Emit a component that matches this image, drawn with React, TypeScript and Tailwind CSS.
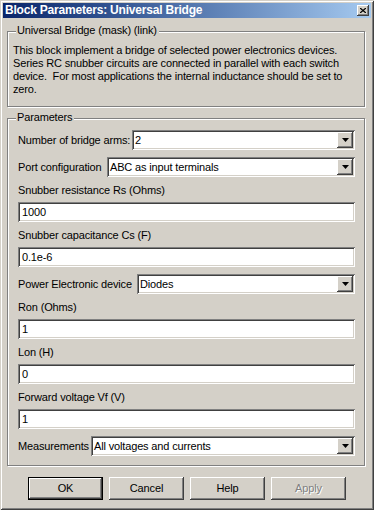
import React from "react";

const raised =
  "shadow-[inset_-1px_-1px_#404040,inset_1px_1px_#ffffff,inset_-2px_-2px_#808080,inset_2px_2px_#d4d0c8]";
const sunken =
  "shadow-[inset_1px_1px_#808080,inset_-1px_-1px_#ffffff,inset_2px_2px_#404040,inset_-2px_-2px_#d4d0c8]";

function Arrow() {
  return (
    <div className={`w-[16px] h-[16px] m-[2px] shrink-0 bg-[#d4d0c8] flex items-center justify-center ${raised}`}>
      <svg width="7" height="4" viewBox="0 0 7 4">
        <polygon points="0,0 7,0 3.5,4" fill="#000" />
      </svg>
    </div>
  );
}

function Combo({ label, value, labelW }: { label: string; value: string; labelW: string }) {
  return (
    <div className="flex items-center h-[20px]">
      <span className={`${labelW} shrink-0 whitespace-nowrap`}>{label}</span>
      <div className={`flex-1 h-[20px] bg-white flex items-center ${sunken}`}>
        <span className="flex-1 pl-[3px] whitespace-nowrap">{value}</span>
        <Arrow />
      </div>
    </div>
  );
}

function Field({ label, value }: { label: string; value: string }) {
  return (
    <div className="flex flex-col gap-[5px]">
      <div className="h-[13px] whitespace-nowrap">{label}</div>
      <div className={`h-[20px] bg-white flex items-center pl-[4px] ${sunken}`}>{value}</div>
    </div>
  );
}

function Btn({ children, def, disabled }: { children: React.ReactNode; def?: boolean; disabled?: boolean }) {
  if (def) {
    return (
      <div className="w-[75px] h-[23px] border border-black flex">
        <div className={`flex-1 flex items-center justify-center ${raised}`}>{children}</div>
      </div>
    );
  }
  return (
    <div
      className={`w-[75px] h-[23px] flex items-center justify-center ${raised} ${
        disabled ? "text-[#808080] [text-shadow:1px_1px_0_#ffffff]" : ""
      }`}
    >
      {children}
    </div>
  );
}

export default function App() {
  return (
    <div
      className={`w-[374px] h-[510px] bg-[#d4d0c8] p-[3px] flex flex-col text-black text-[11px] leading-[13px] tracking-[-0.15px] font-['Liberation_Sans',Arial,sans-serif] shadow-[inset_1px_1px_#d4d0c8,inset_-1px_-1px_#404040,inset_2px_2px_#ffffff,inset_-2px_-2px_#808080]`}
    >
      {/* Title bar */}
      <div className="h-[15px] shrink-0 flex items-center justify-between pl-[2px] pr-[2px] bg-linear-to-r from-[#0a246a] to-[#a6caf0]">
        <span className="text-white font-bold text-[12px] tracking-[-0.2px] leading-[15px]">
          Block Parameters: Universal Bridge
        </span>
        <div className={`w-[12px] h-[11px] bg-[#d4d0c8] flex items-center justify-center ${raised}`}>
          <svg width="6" height="5" viewBox="0 0 6 5">
            <path d="M0 0 L6 5 M6 0 L0 5" stroke="#000" strokeWidth="1.3" />
          </svg>
        </div>
      </div>

      {/* Group 1 */}
      <div className="relative mt-[13px] ml-[4px] w-[358px] h-[76px] shrink-0 border border-[#808080] shadow-[inset_1px_1px_#ffffff,1px_1px_#ffffff] pt-[12px] pl-[5px]">
        <span className="absolute left-[8px] top-[-8px] pl-[1px] pr-[2px] bg-[#d4d0c8] whitespace-nowrap">
          Universal Bridge (mask) (link)
        </span>
        <p className="whitespace-pre">
          {"This block implement a bridge of selected power electronics devices.\nSeries RC snubber circuits are connected in parallel with each switch\ndevice.  For most applications the internal inductance should be set to\nzero."}
        </p>
      </div>

      {/* Group 2 */}
      <div className="relative mt-[11px] ml-[4px] w-[358px] h-[348px] shrink-0 border border-[#808080] shadow-[inset_1px_1px_#ffffff,1px_1px_#ffffff] pt-[11px] pl-[10px] pr-[9px]">
        <span className="absolute left-[8px] top-[-8px] pl-[1px] pr-[2px] bg-[#d4d0c8] whitespace-nowrap">
          Parameters
        </span>
        <div className="flex flex-col gap-[7px]">
          <Combo label="Number of bridge arms:" value="2" labelW="w-[114px]" />
          <Combo label="Port configuration" value="ABC as input terminals" labelW="w-[89px]" />
          <Field label="Snubber resistance Rs (Ohms)" value="1000" />
          <Field label="Snubber capacitance Cs (F)" value="0.1e-6" />
          <Combo label="Power Electronic device" value="Diodes" labelW="w-[119px]" />
          <Field label="Ron (Ohms)" value="1" />
          <Field label="Lon (H)" value="0" />
          <Field label="Forward voltage Vf (V)" value="1" />
          <Combo label="Measurements" value="All voltages and currents" labelW="w-[73px]" />
        </div>
      </div>

      {/* Buttons */}
      <div className="mt-[11px] flex justify-center gap-[6px] pr-[0px]">
        <Btn def>OK</Btn>
        <Btn>Cancel</Btn>
        <Btn>Help</Btn>
        <Btn disabled>Apply</Btn>
      </div>
    </div>
  );
}
